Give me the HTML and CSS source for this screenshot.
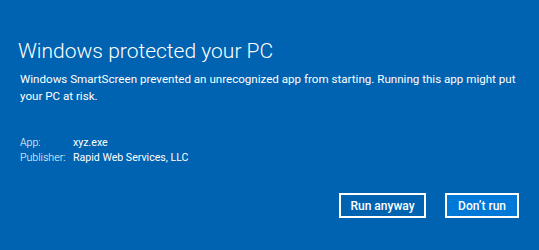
FILE: index.html
```html
<!DOCTYPE html>
<html lang="en">
<head>
  <meta charset="UTF-8">
  <title>Windows protected your PC</title>
  <link rel="stylesheet" href="styles.css">
</head>
<body>
  <div class="dialog">
    <h1>Windows protected your PC</h1>
    <p class="message">Windows SmartScreen prevented an unrecognized app from starting. Running this app might put your PC at risk.</p>

    <dl class="details">
      <dt>App:</dt>
      <dd>xyz.exe</dd>
      <dt>Publisher:</dt>
      <dd>Rapid Web Services, LLC</dd>
    </dl>

    <div class="actions">
      <button class="btn">Run anyway</button>
      <button class="btn btn-primary">Don’t run</button>
    </div>
  </div>
</body>
</html>
```

FILE: styles.css
```css
body {
  margin: 0;
  background-color: #0063b1;
  color: #fff;
  font-family: 'Roboto', 'Open Sans', sans-serif;
}

.dialog {
  width: 539px;
  height: 250px;
  box-sizing: border-box;
  padding: 37px 20px 0 18px;
}

h1 {
  font-size: 21px;
  font-weight: 300;
  margin: 0;
  line-height: 28px;
}

.message {
  font-size: 11.6px;
  line-height: 17px;
  margin: 6px 0 0 2px;
}

.details {
  display: grid;
  grid-template-columns: 53px auto;
  font-size: 10.6px;
  line-height: 15px;
  margin: 30px 0 0 2px;
}

.details dt {
  font-weight: 300;
}

.details dd {
  margin: 0;
}

.actions {
  display: flex;
  justify-content: flex-end;
  gap: 19px;
  margin-top: 28px;
}

.btn {
  height: 25px;
  padding: 0 9.5px;
  font-family: inherit;
  font-size: 12px;
  font-weight: 500;
  color: #fff;
  background-color: transparent;
  border: 2px solid #fff;
}

.btn-primary {
  padding: 0 11px;
  background-color: #0078d7;
}
```
